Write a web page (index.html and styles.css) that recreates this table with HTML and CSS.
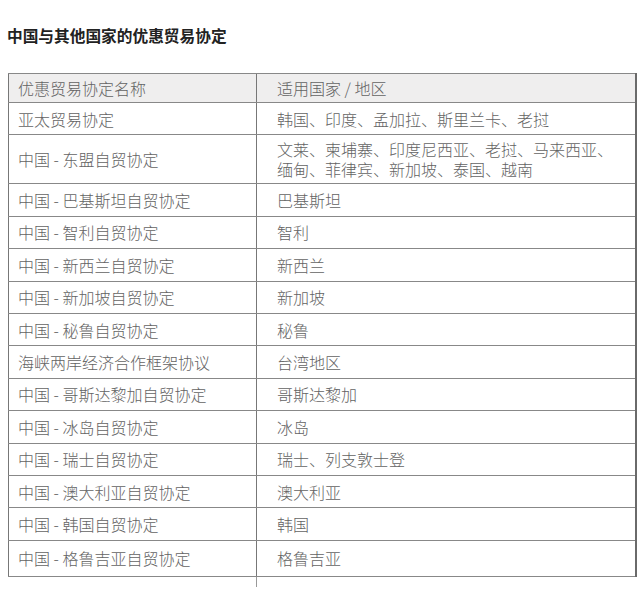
FILE: index.html
```html
<!DOCTYPE html>
<html lang="zh-CN">
<head>
<meta charset="utf-8">
<title>中国与其他国家的优惠贸易协定</title>
<link rel="stylesheet" href="styles.css">
</head>
<body>
<h1 class="title">中国与其他国家的优惠贸易协定</h1>
<table class="fta">
  <colgroup><col class="c1"><col class="c2"></colgroup>
  <thead>
    <tr class="head"><th>优惠贸易协定名称</th><th>适用国家 / 地区</th></tr>
  </thead>
  <tbody>
    <tr><td>亚太贸易协定</td><td>韩国、印度、孟加拉、斯里兰卡、老挝</td></tr>
    <tr class="tall"><td>中国 - 东盟自贸协定</td><td>文莱、柬埔寨、印度尼西亚、老挝、马来西亚、<br>缅甸、菲律宾、新加坡、泰国、越南</td></tr>
    <tr><td>中国 - 巴基斯坦自贸协定</td><td>巴基斯坦</td></tr>
    <tr><td>中国 - 智利自贸协定</td><td>智利</td></tr>
    <tr><td>中国 - 新西兰自贸协定</td><td>新西兰</td></tr>
    <tr><td>中国 - 新加坡自贸协定</td><td>新加坡</td></tr>
    <tr><td>中国 - 秘鲁自贸协定</td><td>秘鲁</td></tr>
    <tr><td>海峡两岸经济合作框架协议</td><td>台湾地区</td></tr>
    <tr><td>中国 - 哥斯达黎加自贸协定</td><td>哥斯达黎加</td></tr>
    <tr><td>中国 - 冰岛自贸协定</td><td>冰岛</td></tr>
    <tr><td>中国 - 瑞士自贸协定</td><td>瑞士、列支敦士登</td></tr>
    <tr><td>中国 - 澳大利亚自贸协定</td><td>澳大利亚</td></tr>
    <tr><td>中国 - 韩国自贸协定</td><td>韩国</td></tr>
    <tr class="last"><td>中国 - 格鲁吉亚自贸协定</td><td>格鲁吉亚</td></tr>
  </tbody>
</table>
<div class="tail"></div>
</body>
</html>
```
FILE: styles.css
```css
html, body {
  margin: 0;
  padding: 0;
  background: #ffffff;
}
body {
  font-family: "Noto Sans CJK SC", "Noto Sans", sans-serif;
  color: #555555;
}
.title {
  margin: 0;
  padding: 26px 0 0 7px;
  height: 73px;
  box-sizing: border-box;
  font-size: 15.7px;
  line-height: 20px;
  font-weight: 700;
  color: #222222;
}
.fta {
  margin-left: 8px;
  width: 629px;
  border-collapse: collapse;
  table-layout: fixed;
  border-top: 1px solid #777777;
  border-left: 1px solid #777777;
  border-right: 2px solid #6a6a6a;
  border-bottom: 1px solid #777777;
}
.c1 { width: 248px; }
.fta th, .fta td {
  padding: 0 0 0 9px;
  text-align: left;
  font-weight: 300;
  font-size: 16px;
  line-height: 20px;
  color: #636363;
  border-top: 1px solid #888888;
  border-bottom: 1px solid #888888;
  border-left: 1px solid #777777;
  vertical-align: middle;
  white-space: nowrap;
}
.fta th + th, .fta td + td {
  padding-left: 20px;
}
.fta tr { height: 32.4px; }
.fta tr.head { height: 29px; }
.fta tr.head th { background: #efeeee; }
.fta tr.tall { height: 49px; }
.fta tr.last { height: 36px; }
.tail {
  margin-left: 256px;
  width: 0;
  height: 10px;
  border-left: 1px solid #999999;
}
```
